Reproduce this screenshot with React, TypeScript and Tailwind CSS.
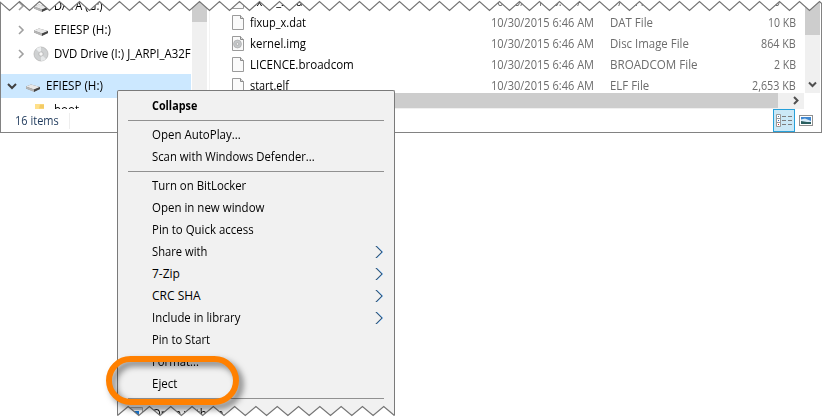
import React, { useLayoutEffect, useRef, useState } from "react";

const FONT = "font-['Open_Sans','Noto_Sans',sans-serif] text-[12px]";

type LabelProps = { w: number; children: string; className?: string };

// A single line of text, condensed to a given width.
function Label({ w, children, className = "" }: LabelProps) {
  const ref = useRef<HTMLSpanElement>(null);
  const [scale, setScale] = useState(1);
  useLayoutEffect(() => {
    if (ref.current && ref.current.offsetWidth) setScale(w / ref.current.offsetWidth);
  }, [w, children]);
  return (
    <span className={`block h-5 shrink-0 ${className}`} style={{ width: w }}>
      <span
        ref={ref}
        className="inline-block origin-left whitespace-nowrap leading-5"
        style={{ transform: `scaleX(${scale})` }}
      >
        {children}
      </span>
    </span>
  );
}

function Chevron({ down = false }: { down?: boolean }) {
  return (
    <svg width="10" height="10" viewBox="0 0 10 10" fill="none" className="shrink-0">
      {down ? (
        <path d="M1 3l4 4 4-4" stroke="#404040" strokeWidth="2" />
      ) : (
        <path d="M3 1l4 4-4 4" stroke="#a0a0a0" strokeWidth="1.6" />
      )}
    </svg>
  );
}

function DriveIcon() {
  return (
    <svg width="16" height="12" viewBox="0 0 16 12" className="relative top-[2px] shrink-0">
      <path d="M1 4.500l5-2 9 2.500v2l-6 2.500-8-3z" fill="#777" />
      <path d="M1 4.500l5-2 9 2.500-6 2.500z" fill="#e8e8e8" />
      <path d="M1 4.500l8 3v2.500l-8-3.500z" fill="#b5b5b5" />
      <path d="M9 7.500l6-2.500v2l-6 3z" fill="#444" />
    </svg>
  );
}

function DiscIcon() {
  return (
    <svg width="16" height="16" viewBox="0 0 16 16" className="shrink-0">
      <circle cx="8" cy="8" r="7" fill="#cfd1d2" stroke="#b0b0b0" strokeWidth=".7" />
      <path d="M8 8L3 3a7 7 0 0 1 5-2z" fill="#eceeef" />
      <path d="M8 8l5 5a7 7 0 0 1-5 2z" fill="#e6e8e9" />
      <circle cx="8" cy="8" r="2.200" fill="#f6f6f6" stroke="#aaa" strokeWidth=".7" />
    </svg>
  );
}

function FolderIcon() {
  return (
    <svg width="12" height="16" viewBox="0 0 12 16" className="shrink-0">
      <path d="M1 2h9v12H1z" fill="#ffe08a" />
      <path d="M6 2.500h4v4H5z" fill="#f3cb66" />
    </svg>
  );
}

function FileIcon({ disc = false }: { disc?: boolean }) {
  return (
    <svg width="12" height="15" viewBox="0 0 12 15" className="shrink-0">
      <path d="M.5.5h8l3 3v11H.5z" fill="#fafafa" stroke="#9b9b9b" />
      <path d="M8.500.5v3h3" fill="#ddd" stroke="#8a8a8a" />
      {disc && (
        <>
          <circle cx="5.500" cy="8" r="4" fill="#c5c8ca" stroke="#a5a5a5" strokeWidth=".6" />
          <circle cx="5.500" cy="8" r="1.400" fill="#eee" stroke="#999" strokeWidth=".6" />
        </>
      )}
    </svg>
  );
}

function TreeRow({ label, w, icon }: { label: string; w: number; icon: React.ReactNode }) {
  return (
    <div className="flex h-6 shrink-0 items-center pl-[15px]">
      <Chevron />
      <span className="ml-[7px] flex w-4 justify-center">{icon}</span>
      <Label w={w} className="ml-[5px]">{label}</Label>
    </div>
  );
}

const files = [
  { name: "fixup_s.dat", nw: 56, type: "DAT File", tw: 43, size: "10 KB", sw: 28 },
  { name: "fixup_x.dat", nw: 56, type: "DAT File", tw: 43, size: "10 KB", sw: 28 },
  { name: "kernel.img", nw: 56, type: "Disc Image File", tw: 79, size: "864 KB", sw: 35 },
  { name: "LICENCE.broadcom", nw: 104, type: "BROADCOM File", tw: 88, size: "2 KB", sw: 22 },
  { name: "start.elf", nw: 39, type: "ELF File", tw: 39, size: "2,653 KB", sw: 44 },
];

type MenuItemProps = { label: string; w: number; sub?: boolean; bold?: boolean };

function MenuItem({ label, w, sub = false, bold = false }: MenuItemProps) {
  return (
    <div className="flex h-[22px] shrink-0 items-center justify-between pl-[34px] pr-[10px]">
      <Label w={w} className={bold ? "font-bold" : ""}>{label}</Label>
      {sub && (
        <svg width="9" height="14" viewBox="0 0 9 14" fill="none">
          <path d="M1.600 1l6 6-6 6" stroke="#4a9be8" strokeWidth="1" />
          <path d="M.8 1l6 6-6 6" stroke="#23405c" strokeWidth="1" />
        </svg>
      )}
    </div>
  );
}

function Separator() {
  return <div className="mx-[10px] my-[3px] h-px shrink-0 bg-[#919191]" />;
}

// Torn edge of the window: teeth 20px apart.
function TopTear() {
  const pts = Array.from({ length: 84 }, (_, i) => `${i * 10 - 0.5},${i % 2 ? 10.5 : 1.5}`).join(" ");
  return (
    <svg className="absolute left-0 top-0" width="822" height="13">
      <polygon points={`0,-2 ${pts} 840,-2`} fill="#fff" />
      <polyline points={pts} fill="none" stroke="#757575" strokeWidth="1.200" />
    </svg>
  );
}

// Torn lower edge of the menu: thirteen teeth across its width.
function MenuTear() {
  const pts = Array.from({ length: 27 }, (_, i) => `${0.5 + i * 10.65},${i % 2 ? 1.5 : 10.5}`).join(" ");
  return (
    <svg className="absolute bottom-0 left-0" width="278" height="14">
      <polygon points={`0,14 0,10.5 ${pts} 278,10.5 278,14`} fill="#fff" />
      <polyline points={pts} fill="none" stroke="#757575" strokeWidth="1.200" />
    </svg>
  );
}

function Explorer() {
  return (
    <div className="flex h-[133px] w-[822px] flex-col overflow-hidden border border-t-0 border-[#828282] bg-white">
      <div className="flex h-[109px]">
        <div className="-mt-[6px] flex h-[115px] w-[190px] flex-col overflow-hidden">
          <TreeRow label="DATA (G:)" w={49} icon={<DriveIcon />} />
          <TreeRow label="EFIESP (H:)" w={57} icon={<DriveIcon />} />
          <TreeRow label="DVD Drive (I:) J_ARPI_A32F" w={137} icon={<DiscIcon />} />
          <div className="mt-2 flex h-6 shrink-0 items-center bg-[#cce8ff] pl-[6px]">
            <Chevron down />
            <span className="ml-[8px]"><DriveIcon /></span>
            <Label w={57} className="ml-[5px]">EFIESP (H:)</Label>
          </div>
          <div className="flex h-6 shrink-0 items-center pl-[33px]">
            <FolderIcon />
            <Label w={25} className="ml-[8px]">boot</Label>
          </div>
        </div>
        <div className="ml-px w-[15px] bg-[#f0f0f0]">
          <div className="h-[22px] bg-[#cdcdcd]" />
        </div>
        <div className="ml-[2px] flex w-[612px] flex-col border-l border-[#f3f3f3]">
          <div className="flex h-[93px]">
            <div className="-mt-[9px] flex w-[595px] flex-col overflow-hidden">
              {files.map((f, i) => (
                <div key={i} className="flex h-[21px] shrink-0 items-center pl-[22px] text-[#6d6d6d]">
                  <FileIcon disc={f.name === "kernel.img"} />
                  <div className="ml-[6px] w-[241px] text-black"><Label w={f.nw}>{f.name}</Label></div>
                  <div className="w-[119px]"><Label w={103}>10/30/2015 6:46 AM</Label></div>
                  <div className="flex w-[186px] justify-between">
                    <Label w={f.tw}>{f.type}</Label>
                    <Label w={f.sw}>{f.size}</Label>
                  </div>
                </div>
              ))}
            </div>
            <div className="flex w-[15px] flex-col justify-between bg-[#f0f0f0]">
              <div className="h-[35px] bg-[#cdcdcd]" />
              <svg width="15" height="16" fill="none"><path d="M4 5.500l3.500 3.500L11 5.500" stroke="#505050" strokeWidth="2" /></svg>
            </div>
          </div>
          <div className="flex h-[16px] w-[594px] bg-[#f0f0f0]">
            <div className="h-[15px] w-[568px] bg-[#cdcdcd]" />
            <svg width="26" height="15" fill="none"><path d="M16 4l3.500 3.500L16 11" stroke="#505050" strokeWidth="2" /></svg>
          </div>
        </div>
      </div>
      <div className="flex h-[23px] items-center pl-[14px] pr-[8px] text-[#1e395b]">
        <Label w={44}>16 items</Label>
        <div className="ml-[10px] h-4 w-px bg-[#eee]" />
        <div className="ml-auto flex h-[23px] w-[22px] items-center justify-center border border-[#26a0da] bg-[#cbe8f6]">
          <svg width="18" height="14" fill="none" className="shrink-0">
            <path d="M1.500.5h4v12h-4zM1.500 4.500h4M1.500 8.500h4" fill="#fff" stroke="#999" />
            <path d="M7 2.500h4m2 0h4M7 6.500h4m2 0h4M7 10.500h4m2 0h4" stroke="#7d7d7d" />
            <path d="M3 2.500h1" stroke="#4a78b0" />
            <path d="M3 6.500h1" stroke="#3060c0" />
            <path d="M3 10.500h1" stroke="#d22" />
          </svg>
        </div>
        <svg className="ml-[4px]" width="14" height="12">
          <rect x=".5" y=".5" width="13" height="10" fill="#fff" stroke="#8f8f8f" />
          <rect x="2" y="2" width="10" height="7" fill="#3f87d0" />
          <path d="M2 4.500l4-1 6 2.500v1H2z" fill="#d6eaf8" />
          <path d="M2 6l6 1h4v2H2z" fill="#2a5f60" />
        </svg>
      </div>
    </div>
  );
}

function ContextMenu() {
  return (
    <div className="absolute left-[117px] top-[90px] h-[329px] w-[278px]">
      <div className="flex h-[326px] flex-col overflow-hidden rounded-t-[2px] border border-b-0 border-[#7a7a7a] bg-[#f1f1f1] pt-[4px]">
        <MenuItem label="Collapse" w={45} bold />
        <Separator />
        <MenuItem label="Open AutoPlay..." w={89} />
        <MenuItem label="Scan with Windows Defender..." w={163} />
        <Separator />
        <MenuItem label="Turn on BitLocker" w={94} />
        <MenuItem label="Open in new window" w={112} />
        <MenuItem label="Pin to Quick access" w={102} />
        <MenuItem label="Share with" w={55} sub />
        <MenuItem label="7-Zip" w={28} sub />
        <MenuItem label="CRC SHA" w={49} sub />
        <MenuItem label="Include in library" w={88} sub />
        <MenuItem label="Pin to Start" w={58} />
        <MenuItem label="Format..." w={47} />
        <MenuItem label="Eject" w={25} />
        <Separator />
        <div className="flex h-[22px] shrink-0 pl-[12px]">
          <svg width="13" height="13" className="mt-[5px] shrink-0">
            <path d="M.5.5h12v12H.5z" fill="#f7f7f7" stroke="#a0a0a0" />
            <path d="M1 1h11v2H1z" fill="#c9cdd2" />
            <path d="M4 4h5v5H4z" fill="#1577d3" />
          </svg>
          <Label w={72} className="ml-[9px] mt-[2px]">Open with on</Label>
        </div>
      </div>
      <MenuTear />
    </div>
  );
}

export default function App() {
  return (
    <div className={`relative h-[419px] w-[822px] overflow-hidden bg-white text-black ${FONT}`}>
      <Explorer />
      <TopTear />
      <ContextMenu />
      <svg className="absolute left-[100px] top-[350px]" width="150" height="69">
        <rect x="9" y="9" width="127" height="43" rx="21.500" fill="none" stroke="#ff8000" strokeWidth="6" className="drop-shadow-[4px_4px_3px_rgba(0,0,0,0.5)]" />
      </svg>
    </div>
  );
}
